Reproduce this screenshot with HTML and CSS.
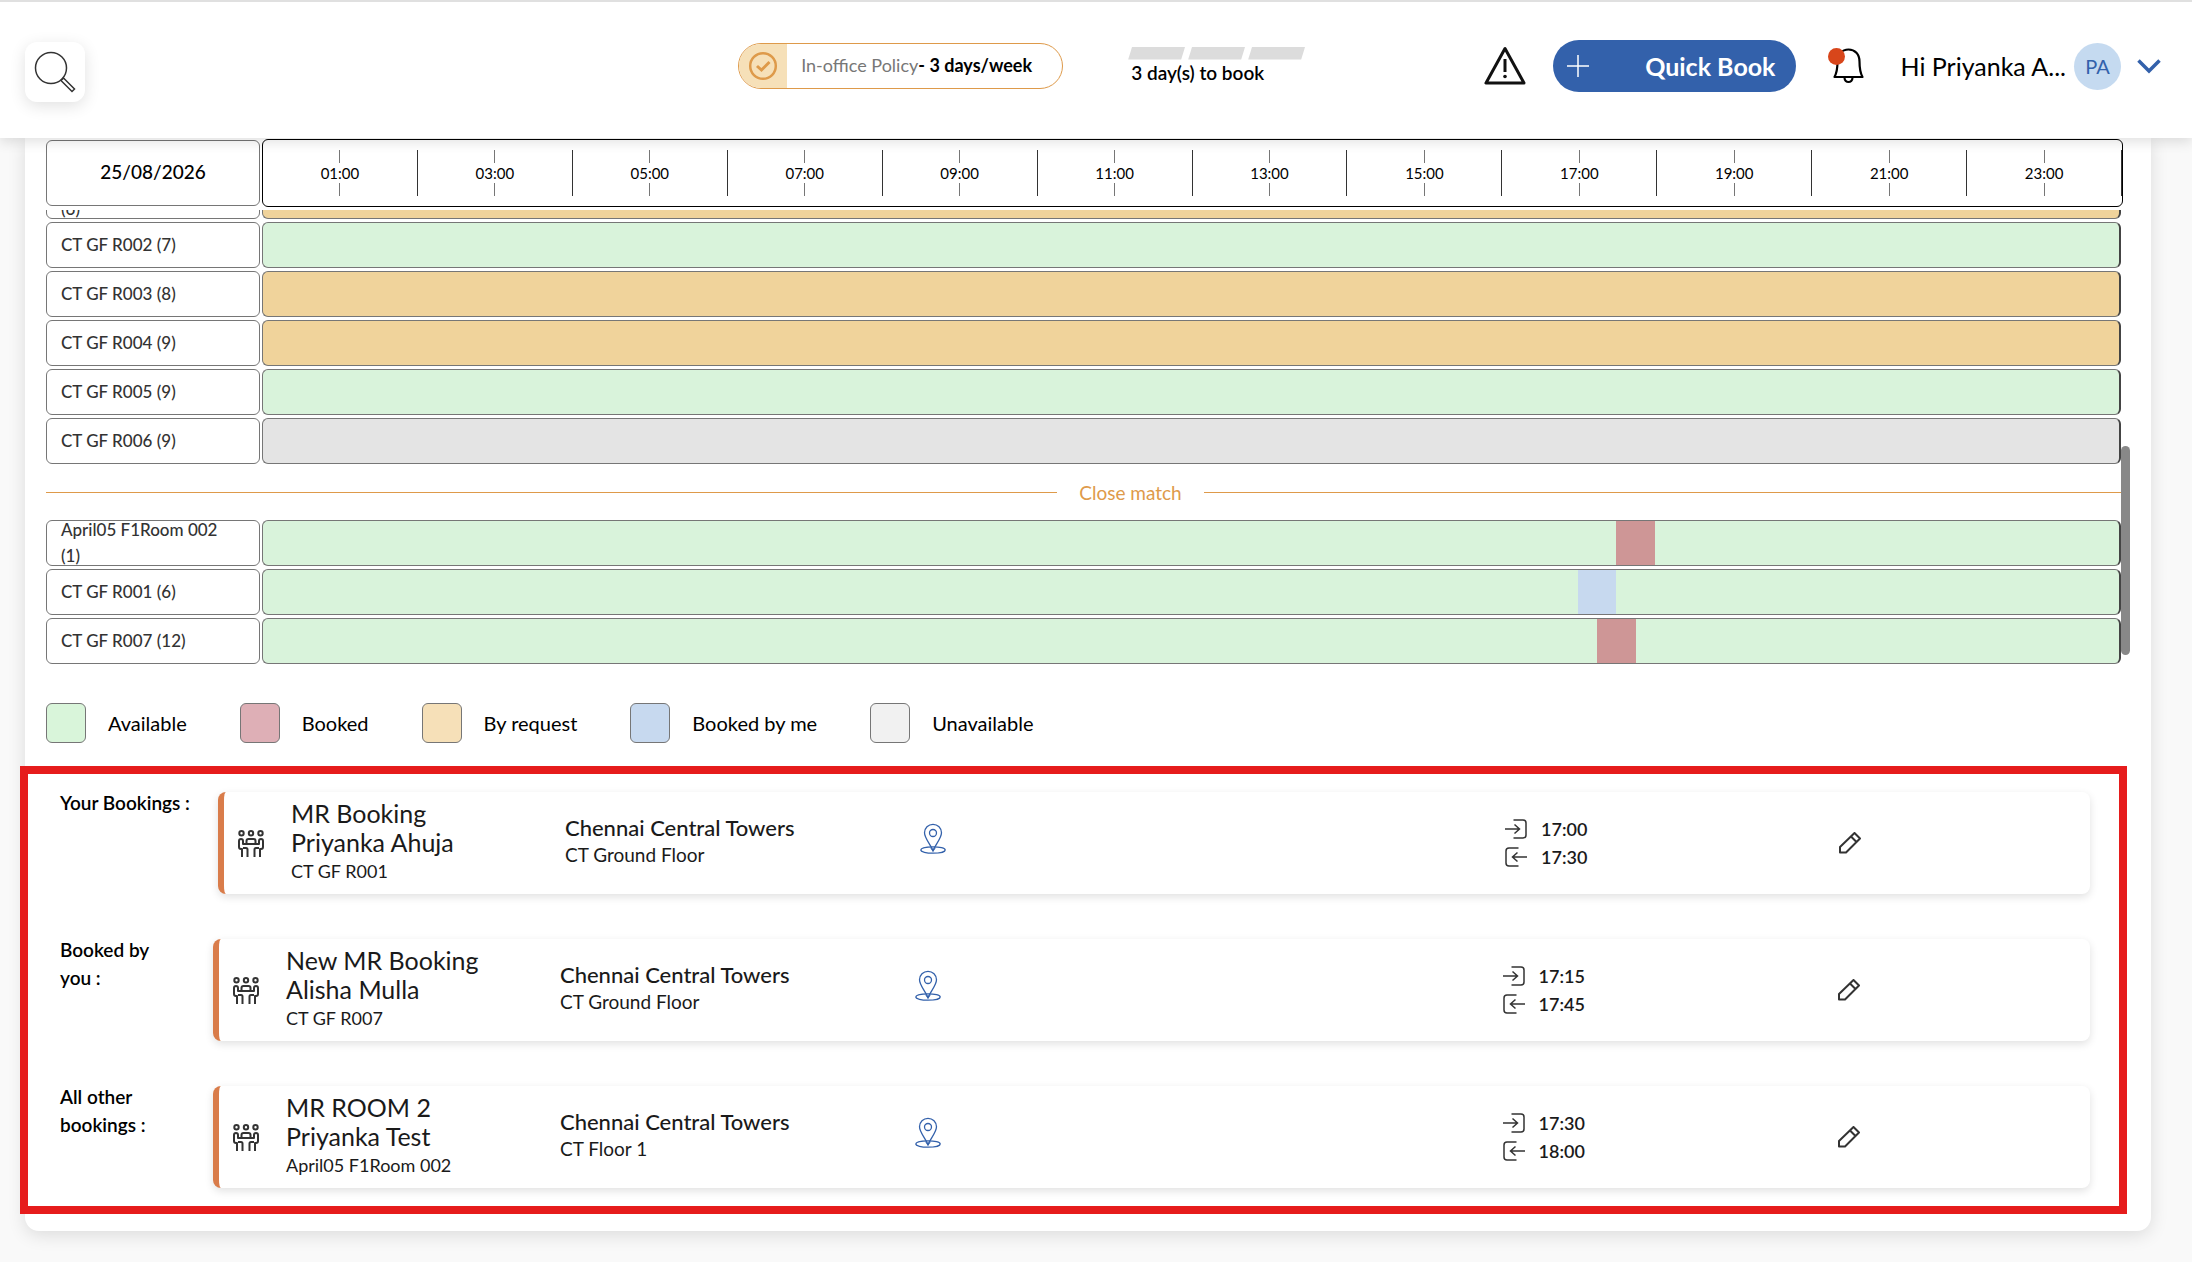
FILE: index.html
```html
<!DOCTYPE html>
<html lang="en">
<head>
  <meta charset="utf-8">
  <title>Meeting room bookings</title>
  <link rel="stylesheet" href="styles.css">
</head>
<body>
  <!-- shared icons -->
  <svg class="sprite" aria-hidden="true">
    <symbol id="icon-meeting" viewBox="0 0 26 27">
      <g fill="none" stroke="#333" stroke-width="2" stroke-linejoin="round">
        <circle cx="3.5" cy="3.2" r="2.2"/>
        <circle cx="13" cy="3.2" r="2.2"/>
        <circle cx="22.5" cy="3.2" r="2.2"/>
        <path d="M4 27v-8H3q-2 0-2-2v-6q0-2 2-2t2 2v3h16v-3q0-2 2-2t2 2v6q0 2-2 2h-1v8"/>
        <path d="M9.500 27v-7.500q0-1.500-1.500-1.500H5M16.500 27v-7.500q0-1.500 1.500-1.500h3M8.500 13.500V11q0-2 2-2h5q2 0 2 2v2.500"/>
      </g>
    </symbol>
    <symbol id="icon-pin" viewBox="0 0 26 32">
      <g fill="none" stroke="#3361ab" stroke-width="1.300">
        <path d="M13 27.500C10 21 4.500 15 4.500 9.800a8.500 8.500 0 0 1 17 0C21.500 15 16 21 13 27.500z"/>
        <circle cx="13" cy="10" r="3.500"/>
        <ellipse cx="13" cy="27" rx="12.200" ry="3.200"/>
      </g>
      <path d="M10 24.500l3 1.500 3-1.500-3 4.500z" fill="#3361ab"/>
    </symbol>
    <symbol id="icon-in" viewBox="0 0 22 20">
      <path d="M8.500 1H18q3 0 3 3v12q0 3-3 3H8.500M0 10h14M9.500 5.500L14.500 10l-5 4.500" fill="none" stroke="#333" stroke-width="1.500"/>
    </symbol>
    <symbol id="icon-out" viewBox="0 0 22 20">
      <path d="M13.500 1H4Q1 1 1 4v12q0 3 3 3h9.500M22 10H8M12.500 5.500L7.500 10l5 4.500" fill="none" stroke="#333" stroke-width="1.500"/>
    </symbol>
    <symbol id="icon-edit" viewBox="0 0 22 22">
      <path d="M1 15L15.500 1l5.500 5.500L7 20.500H1zM12 4.500l5.500 5.500" fill="none" stroke="#333" stroke-width="2" stroke-linejoin="round"/>
    </symbol>
  </svg>

  <header class="topbar">
    <div class="topbar-left">
      <button class="search-btn" type="button" aria-label="Search">
        <svg width="42" height="42" viewBox="0 0 42 42" fill="none" stroke="#333" stroke-width="1.500">
          <circle cx="17" cy="17" r="15.500"/>
          <path d="M27 29.500l2.500-2.500L40.500 38 38 40.500z"/>
        </svg>
      </button>
    </div>

    <div class="topbar-center">
      <div class="policy">
        <span class="policy-icon">
          <svg width="30" height="30" viewBox="0 0 30 30" fill="none" stroke="#de9a4a" stroke-width="2.500">
            <circle cx="15" cy="15" r="12.800"/>
            <path d="M9 15l4.500 4 8-8" stroke-width="3"/>
          </svg>
        </span>
        <span class="policy-text">In-office Policy<strong>- 3 days/week</strong></span>
      </div>
      <div class="progress">
        <div class="progress-steps"><span></span><span></span><span></span></div>
        <div class="progress-text">3 day(s) to book</div>
      </div>
    </div>

    <div class="topbar-right">
      <svg class="warning" width="42" height="40" viewBox="0 0 42 40" fill="none" stroke="#111" stroke-linejoin="round">
        <path d="M21 2.500L2 37h38z" stroke-width="3"/>
        <path d="M21 13v13" stroke-width="3"/>
        <circle cx="21" cy="30.500" r="1.800" fill="#111" stroke="none"/>
      </svg>
      <button class="quick-book" type="button">
        <svg width="22" height="22" viewBox="0 0 22 22" stroke="#fff" stroke-width="1.500"><path d="M11 0v22M0 11h22"/></svg>
        Quick Book
      </button>
      <button class="bell" type="button" aria-label="Notifications">
        <svg width="36" height="36" viewBox="0 0 36 36" fill="none" stroke="#000" stroke-width="2.200" stroke-linejoin="round">
          <path d="M6.500 29C9 24.500 9.500 21 9.500 13.500C9.500 6 14 1.500 20.500 1.500S31.500 6 31.500 13.500C31.500 21 32 24.500 34.500 29z"/>
          <path d="M16.500 29.500c0 6 8 6 8 0"/>
          <circle cx="8.500" cy="8.500" r="8.500" fill="#d8461b" stroke="none"/>
        </svg>
      </button>
      <button class="profile" type="button">
        <span>Hi Priyanka A...</span>
        <span class="avatar">PA</span>
        <svg width="24" height="15" viewBox="0 0 24 15" fill="none" stroke="#3361ab" stroke-width="3.500"><path d="M1.500 1.500L12 12 22.500 1.500"/></svg>
      </button>
    </div>
  </header>

  <main class="panel">
    <div class="timeline-head">
      <div class="date">25/08/2026</div>
      <div class="hours">
        <div class="hour">01:00</div>
        <div class="hour">03:00</div>
        <div class="hour">05:00</div>
        <div class="hour">07:00</div>
        <div class="hour">09:00</div>
        <div class="hour">11:00</div>
        <div class="hour">13:00</div>
        <div class="hour">15:00</div>
        <div class="hour">17:00</div>
        <div class="hour">19:00</div>
        <div class="hour">21:00</div>
        <div class="hour">23:00</div>
      </div>
    </div>

    <div class="rooms">
      <div class="room-list">
        <div class="room"><div class="room-name"><br>(6)</div><div class="bar request"></div></div>
        <div class="room"><div class="room-name">CT GF R002 (7)</div><div class="bar free"></div></div>
        <div class="room"><div class="room-name">CT GF R003 (8)</div><div class="bar request"></div></div>
        <div class="room"><div class="room-name">CT GF R004 (9)</div><div class="bar request"></div></div>
        <div class="room"><div class="room-name">CT GF R005 (9)</div><div class="bar free"></div></div>
        <div class="room"><div class="room-name">CT GF R006 (9)</div><div class="bar unavailable"></div></div>
        <div class="divider">Close match</div>
        <div class="room">
          <div class="room-name">April05 F1Room 002 (1)</div>
          <div class="bar free"><span class="slot booked" style="margin-left: 72.92%; width: 2.08%"></span></div>
        </div>
        <div class="room">
          <div class="room-name">CT GF R001 (6)</div>
          <div class="bar free"><span class="slot mine" style="margin-left: 70.83%; width: 2.08%"></span></div>
        </div>
        <div class="room">
          <div class="room-name">CT GF R007 (12)</div>
          <div class="bar free"><span class="slot booked" style="margin-left: 71.88%; width: 2.08%"></span></div>
        </div>
      </div>
      <div class="scroll-thumb"></div>
    </div>

    <ul class="legend">
      <li><span class="swatch available"></span>Available</li>
      <li><span class="swatch taken"></span>Booked</li>
      <li><span class="swatch by-request"></span>By request</li>
      <li><span class="swatch by-me"></span>Booked by me</li>
      <li><span class="swatch off"></span>Unavailable</li>
    </ul>

    <section class="bookings">
      <div class="booking own">
        <div class="booking-label">Your Bookings :</div>
        <article class="card">
          <svg class="meeting" width="26" height="27"><use href="#icon-meeting"/></svg>
          <div class="who"><h3>MR Booking<br>Priyanka Ahuja</h3><p>CT GF R001</p></div>
          <div class="where"><h4>Chennai Central Towers</h4><p>CT Ground Floor</p></div>
          <button class="icon-btn pin" type="button" aria-label="Show on map"><svg width="26" height="32"><use href="#icon-pin"/></svg></button>
          <div class="times">
            <div><svg width="22" height="20"><use href="#icon-in"/></svg>17:00</div>
            <div><svg width="22" height="20"><use href="#icon-out"/></svg>17:30</div>
          </div>
          <button class="icon-btn" type="button" aria-label="Edit"><svg width="22" height="22"><use href="#icon-edit"/></svg></button>
        </article>
      </div>

      <div class="booking">
        <div class="booking-label">Booked by you :</div>
        <article class="card">
          <svg class="meeting" width="26" height="27"><use href="#icon-meeting"/></svg>
          <div class="who"><h3>New MR Booking<br>Alisha Mulla</h3><p>CT GF R007</p></div>
          <div class="where"><h4>Chennai Central Towers</h4><p>CT Ground Floor</p></div>
          <button class="icon-btn pin" type="button" aria-label="Show on map"><svg width="26" height="32"><use href="#icon-pin"/></svg></button>
          <div class="times">
            <div><svg width="22" height="20"><use href="#icon-in"/></svg>17:15</div>
            <div><svg width="22" height="20"><use href="#icon-out"/></svg>17:45</div>
          </div>
          <button class="icon-btn" type="button" aria-label="Edit"><svg width="22" height="22"><use href="#icon-edit"/></svg></button>
        </article>
      </div>

      <div class="booking">
        <div class="booking-label">All other bookings :</div>
        <article class="card">
          <svg class="meeting" width="26" height="27"><use href="#icon-meeting"/></svg>
          <div class="who"><h3>MR ROOM 2<br>Priyanka Test</h3><p>April05 F1Room 002</p></div>
          <div class="where"><h4>Chennai Central Towers</h4><p>CT Floor 1</p></div>
          <button class="icon-btn pin" type="button" aria-label="Show on map"><svg width="26" height="32"><use href="#icon-pin"/></svg></button>
          <div class="times">
            <div><svg width="22" height="20"><use href="#icon-in"/></svg>17:30</div>
            <div><svg width="22" height="20"><use href="#icon-out"/></svg>18:00</div>
          </div>
          <button class="icon-btn" type="button" aria-label="Edit"><svg width="22" height="22"><use href="#icon-edit"/></svg></button>
        </article>
      </div>
    </section>
  </main>
</body>
</html>
```

FILE: styles.css
```css
:root {
  --blue: #3361ab;
  --orange: #de9a4a;
  --line: #767676;
  --free: #d9f3db;
  --request: #f0d39b;
}

* {
  box-sizing: border-box;
}
body {
  margin: 0;
  min-height: 100vh;
  background: #f9f9f9;
  color: #000;
  font-family: Lato, "Open Sans", sans-serif;
  font-size: 18px;
}
button {
  padding: 0;
  border: none;
  background: none;
  color: inherit;
  font: inherit;
  cursor: pointer;
}
svg {
  display: block;
  flex: none;
}
h3, h4, p, ul {
  margin: 0;
  padding: 0;
}
.sprite {
  position: absolute;
  width: 0;
  height: 0;
}

/* top bar */
.topbar {
  position: relative;
  z-index: 1;
  display: grid;
  grid-template-columns: 5fr auto 6fr;
  align-items: center;
  height: 138px;
  padding: 0 31px 8px 25px;
  border-top: 2px solid #e0e0e0;
  background: #fff;
  box-shadow: 0 4px 12px rgba(0, 0, 0, 0.12);
}
.topbar-left {
  padding-top: 12px;
}
.search-btn {
  display: grid;
  place-items: center;
  width: 60px;
  height: 60px;
  border-radius: 12px;
  background: #fff;
  box-shadow: 0 4px 16px rgba(0, 0, 0, 0.12);
}
.topbar-center {
  display: flex;
  align-items: center;
  gap: 65px;
}
.policy {
  display: flex;
  width: 325px;
  height: 46px;
  overflow: hidden;
  border: 1px solid var(--orange);
  border-radius: 23px;
}
.policy-icon {
  display: grid;
  place-items: center;
  width: 48px;
  background: #f6e0b8;
}
.policy-text {
  padding-left: 14px;
  color: #777;
  line-height: 42px;
  white-space: nowrap;
}
.policy-text strong {
  color: #000;
}
.progress {
  width: 177px;
  font-size: 19px;
  font-weight: 600;
}
.progress-steps {
  display: flex;
  gap: 3px;
}
.progress-steps span {
  flex: 1;
  height: 13px;
  background: #dcdcdc;
  clip-path: polygon(4px 0, 100% 0, calc(100% - 4px) 100%, 0 100%);
}
.progress-text {
  padding-left: 3px;
  line-height: 26px;
}
.topbar-right {
  display: flex;
  align-items: center;
  justify-content: flex-end;
}
.quick-book {
  display: flex;
  align-items: center;
  justify-content: space-between;
  width: 243px;
  height: 52px;
  margin: 0 32px 0 27px;
  padding: 0 21px 0 14px;
  border-radius: 26px;
  background: var(--blue);
  color: #fff;
  font-size: 25px;
  font-weight: 700;
}
.bell {
  margin-right: 36px;
}
.profile {
  display: flex;
  align-items: center;
  font-size: 25px;
}
.avatar {
  width: 47px;
  height: 47px;
  margin: 0 16px 0 8px;
  border-radius: 50%;
  background: #c5daf0;
  color: var(--blue);
  font-size: 20px;
  line-height: 46px;
}

/* timeline */
.panel {
  margin: 0 41px 31px 25px;
  padding: 1px 28px 17px 21px;
  border-radius: 0 0 14px 14px;
  background: #fff;
  box-shadow: 0 4px 18px rgba(0, 0, 0, 0.12);
}
.timeline-head {
  display: flex;
  align-items: center;
  gap: 2px;
  margin-bottom: 3px;
}
.date {
  width: 214px;
  padding-bottom: 2px;
  border: 1px solid var(--line);
  border-radius: 6px;
  font-size: 19px;
  font-weight: 500;
  line-height: 62px;
  text-align: center;
}
.hours {
  flex: 1;
  display: flex;
  height: 68px;
  padding: 10px 0;
  border: 1px solid #000;
  border-radius: 6px;
}
.hour {
  flex: 1;
  display: flex;
  flex-direction: column;
  align-items: center;
  justify-content: space-between;
  border-right: 1px solid #333;
  font-size: 15px;
  line-height: 18px;
}
.hour::before,
.hour::after {
  content: "";
  width: 1px;
  height: 13px;
  background: var(--line);
}

/* room rows */
.rooms {
  position: relative;
}
.room-list {
  display: flex;
  flex-direction: column;
  justify-content: flex-end;
  gap: 3px;
  height: 454px;
  overflow: hidden;
}
.room {
  display: flex;
  gap: 2px;
  height: 46px;
  flex: none;
  padding-right: 2px;
}
.room-name {
  display: flex;
  flex-direction: column;
  justify-content: center;
  width: 214px;
  padding: 0 32px 0 14px;
  border: 1px solid var(--line);
  border-radius: 6px;
  color: #333;
  font-size: 17px;
  font-weight: 500;
  line-height: 26px;
}
.bar {
  flex: 1;
  display: flex;
  border: 1px solid var(--line);
  border-right: 2px solid #444;
  border-radius: 6px;
}
.free {
  background: var(--free);
}
.request {
  background: var(--request);
}
.unavailable {
  background: #e4e4e4;
}
.booked {
  background: #ce9696;
}
.mine {
  background: #c7d9ef;
}
.divider {
  display: flex;
  align-items: center;
  gap: 22px;
  height: 50px;
  flex: none;
  color: var(--orange);
  font-size: 19px;
}
.divider::before,
.divider::after {
  content: "";
  height: 1px;
  background: var(--orange);
}
.divider::before {
  flex: 11;
}
.divider::after {
  flex: 10;
}
.scroll-thumb {
  position: absolute;
  top: 236px;
  right: -7px;
  width: 9px;
  height: 209px;
  border-radius: 5px;
  background: #888;
}

/* legend */
.legend {
  display: flex;
  gap: 53px;
  margin: 39px 0 23px;
  list-style: none;
  font-size: 20px;
}
.legend li {
  display: flex;
  align-items: center;
  gap: 22px;
}
.swatch {
  width: 40px;
  height: 40px;
  border: 1px solid var(--line);
  border-radius: 6px;
}
.available {
  background: #d9f5da;
}
.taken {
  background: #deafb6;
}
.by-request {
  background: #f6e0b8;
}
.by-me {
  background: #c7d9ef;
}
.off {
  background: #f1f1f1;
}

/* bookings */
.bookings {
  position: relative;
  display: flex;
  flex-direction: column;
  gap: 45px;
  margin: 0 -4px 0 -26px;
  padding: 18px 29px 18px 32px;
  border: 8px solid #e61c1c;
}
.booking {
  display: flex;
}
.booking-label {
  width: 153px;
  margin-top: -3px;
  padding-right: 44px;
  font-size: 19px;
  font-weight: 600;
  line-height: 28px;
}
.own .booking-label {
  width: 158px;
  padding-right: 0;
  white-space: nowrap;
}
.card {
  flex: 1;
  display: grid;
  grid-template-columns: 67px 274px 355px 7fr 4fr 3fr;
  align-items: center;
  height: 102px;
  border-left: 6px solid #d97c4a;
  border-radius: 8px;
  background: #fff;
  box-shadow: 0 3px 8px rgba(0, 0, 0, 0.12);
  color: #1a1a1a;
}
.meeting {
  margin-left: 14px;
}
.who,
.where {
  padding-bottom: 3px;
}
.who h3 {
  font-size: 25px;
  font-weight: 400;
  line-height: 29px;
}
.card p {
  font-size: 19px;
  line-height: 28px;
}
.card .who p {
  font-size: 18px;
}
.where h4 {
  font-size: 22px;
  font-weight: 500;
  line-height: 26px;
}
.icon-btn {
  justify-self: start;
}
.pin {
  padding-bottom: 8px;
}
.times {
  font-weight: 600;
}
.times div {
  display: flex;
  align-items: center;
  gap: 14px;
  line-height: 28px;
}
```
